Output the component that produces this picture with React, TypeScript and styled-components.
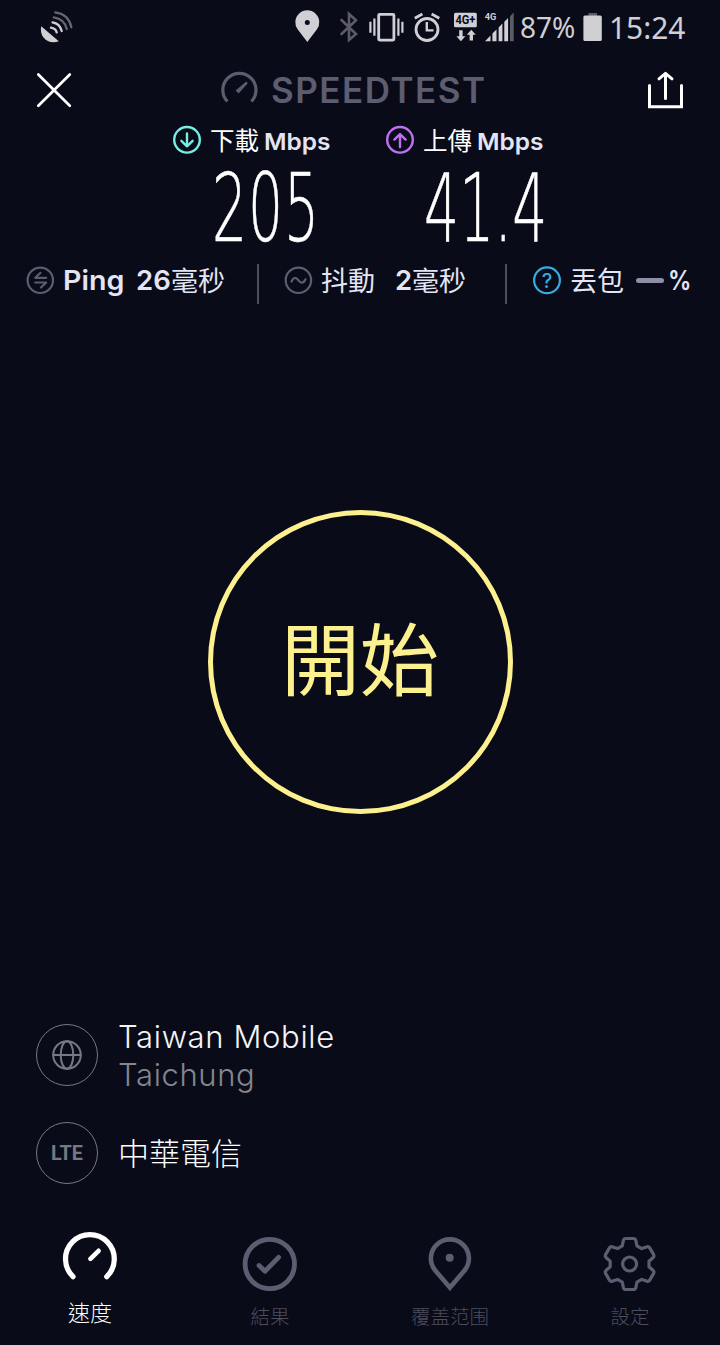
import React from 'react';
import styled, { createGlobalStyle } from 'styled-components';

const GlobalStyle = createGlobalStyle`
  * { box-sizing: border-box; }
  body { margin: 0; background: #090b19; }
`;

const LATIN = `Inter, 'Noto Sans CJK TC', sans-serif`;
const CJK = `'Noto Sans CJK TC', sans-serif`;
const MUTED = '#5c5d70';
const LIGHT = '#e4e5f4';

const Screen = styled.main`
  width: 720px;
  height: 1345px;
  display: flex;
  flex-direction: column;
  background: #090b19;
  color: #fff;
  overflow: hidden;
  font-family: ${LATIN};
`;

/* Text run; $w is the room it takes in its row, $sx narrows or widens the letters. */
const Text = styled.span<{
  $size: number; $w?: number; $weight?: number; $color?: string;
  $track?: number; $sx?: number; $font?: string; $ml?: number; $drop?: number;
}>`
  flex: none;
  display: block;
  white-space: pre;
  width: ${p => (p.$w ? `${p.$w}px` : 'auto')};
  margin-left: ${p => p.$ml ?? 0}px;
  margin-top: ${p => p.$drop ?? 0}px;
  font: ${p => p.$weight ?? 400} ${p => p.$size}px/1 ${p => p.$font ?? LATIN};
  letter-spacing: ${p => p.$track ?? 0}px;
  color: ${p => p.$color ?? '#fff'};
  transform: scaleX(${p => p.$sx ?? 1});
  transform-origin: left center;
`;

const Figure = styled(Text)`
  -webkit-text-stroke: 0.6px #fff;
`;

const Svg = styled.svg<{ $ml?: number }>`
  flex: none;
  display: block;
  overflow: visible;
  fill: none;
  stroke-linecap: round;
  stroke-linejoin: round;
  margin-left: ${p => p.$ml ?? 0}px;
`;

type IconProps = { box: [number, number, number, number]; ml?: number; children: React.ReactNode };
const Icon = ({ box, ml, children }: IconProps) => (
  <Svg $ml={ml} width={box[2]} height={box[3]} viewBox={box.join(' ')}>{children}</Svg>
);

const StatusBar = styled.div`
  height: 54px;
  display: flex;
  align-items: center;
  padding-left: 40px;
`;

const Header = styled.header`
  height: 72px;
  display: flex;
  align-items: center;
  padding-left: 36px;
`;

const Speeds = styled.section`
  height: 129px;
  display: flex;
  padding-left: 173px;
`;
const Speed = styled.div<{ $w: number }>`
  width: ${p => p.$w}px;
  display: flex;
  flex-direction: column;
`;
const SpeedLabel = styled.div`
  height: 28px;
  display: flex;
  align-items: center;
`;

const Stats = styled.section`
  height: 50px;
  display: flex;
  align-items: center;
  padding-left: 26px;
`;
const Divider = styled.div<{ $ml: number }>`
  flex: none;
  width: 2px;
  height: 40px;
  margin: 8px 0 0 ${p => p.$ml}px;
  background: #4d4e60;
`;
const Dash = styled.div`
  flex: none;
  width: 28px;
  height: 5px;
  border-radius: 3px;
  background: #8e8fa6;
`;

const Stage = styled.section`
  height: 711px;
  display: flex;
  justify-content: center;
  padding-top: 205px;
`;
const StartButton = styled.button`
  width: 305px;
  height: 304px;
  padding: 0;
  border: 5px solid #fdf08e;
  border-radius: 50%;
  background: none;
  display: flex;
  align-items: center;
  justify-content: center;
`;

const Connection = styled.div`
  height: 98px;
  display: flex;
  align-items: center;
  padding: 0 0 20px 36px;
`;
const RoundBadge = styled.div`
  flex: none;
  width: 62px;
  height: 62px;
  border: 1.5px solid #777884;
  border-radius: 50%;
  display: flex;
  align-items: center;
  justify-content: center;
`;
const Names = styled.div`
  display: flex;
  flex-direction: column;
  gap: 7px;
  margin-left: 20px;
`;

const Nav = styled.nav`
  flex: 1;
  display: grid;
  grid-template-columns: repeat(4, 180px);
`;
const Tab = styled.div<{ $top: number; $gap: number }>`
  display: flex;
  flex-direction: column;
  align-items: center;
  padding-top: ${p => p.$top}px;
  gap: ${p => p.$gap}px;
`;

const gearPath = (() => {
  const at = (x: number, y: number, deg: number) => {
    const a = (deg * Math.PI) / 180;
    return `${(x * Math.cos(a) - y * Math.sin(a)).toFixed(2)} ${(x * Math.sin(a) + y * Math.cos(a)).toFixed(2)}`;
  };
  let d = '';
  for (let i = 0; i < 6; i++) {
    const r = i * 60;
    d += `${i ? 'L' : 'M'}${at(-7.3, -18.2, r)} L${at(-6.3, -23.3, r)} Q${at(-5.8, -25.5, r)} ${at(-3.6, -25.5, r)}`;
    d += ` L${at(3.6, -25.5, r)} Q${at(5.8, -25.5, r)} ${at(6.3, -23.3, r)} L${at(7.3, -18.2, r)} `;
  }
  return d + 'Z';
})();

export default function App() {
  return (
    <>
      <GlobalStyle />
      <Screen>
        <StatusBar>
          <Icon box={[40, 11, 32, 32]}>
            <path d="M41.2 26.2C39 37 48 45 58.8 41.2Z" fill="#d0d0d4" />
            <g strokeWidth="2.3">
              <path d="M51 27.7Q55.5 28.4 56.7 32.3M52.5 22.3Q60 23.5 61.7 31" stroke="#d0d0d4" />
              <path d="M53.8 17.4Q64.5 19 66.8 29M55.3 12.4Q69 14.5 71.3 27.3" stroke="#65666f" />
            </g>
          </Icon>
          <Icon box={[295, 11, 24, 32]} ml={223}>
            <path fillRule="evenodd" fill="#d0d0d4" d="M307.3 42L297.8 29.6A12 12 0 1 1 316.8 29.6ZM307.3 20A2.5 2.5 0 1 0 307.3 25A2.5 2.5 0 1 0 307.3 20Z" />
          </Icon>
          <Icon box={[340, 11, 18, 32]} ml={21}>
            <path d="M341.5 20L356 34L349 40V14L356 20.3L341.5 34" stroke="#5b5c65" strokeWidth="2.6" strokeLinejoin="miter" />
          </Icon>
          <Icon box={[369, 11, 36, 32]} ml={11}>
            <g stroke="#d0d0d4" strokeLinecap="butt">
              <rect x="378.7" y="14.3" width="15.2" height="25.8" rx="1" strokeWidth="2.8" />
              <path d="M370.4 21.7V32.7M374.4 18.5V35.7M398.4 18.5V35.7M402.4 21.7V32.7" strokeWidth="2.2" />
            </g>
          </Icon>
          <Icon box={[414, 11, 27, 32]} ml={9}>
            <g stroke="#d0d0d4" strokeWidth="2.8" strokeLinecap="butt">
              <circle cx="427" cy="29.5" r="11" />
              <path d="M414.8 18.2L422.4 14M431.6 14L439.3 18.2" />
              <path d="M426.8 22V30.4H433.5" strokeWidth="2.4" strokeLinejoin="miter" />
            </g>
          </Icon>
          <Icon box={[454, 11, 23, 32]} ml={13}>
            <rect x="454" y="12.8" width="22.8" height="14.4" rx="1.5" fill="#d0d0d4" />
            <text x="455.4" y="24.3" fill="#090b19" fontFamily="Roboto, sans-serif" fontWeight="700" fontSize="12" textLength="20" lengthAdjust="spacingAndGlyphs">4G+</text>
            <path d="M459.2 30.3H462.6V36.2H465.4L460.9 41.2L456.4 36.2H459.2ZM469.6 40.6H473V34.8H475.8L471.3 29.8L466.8 34.8H469.6Z" fill="#d0d0d4" />
          </Icon>
          <Icon box={[484, 11, 30, 32]} ml={7}>
            <text x="484.8" y="20" fill="#d0d0d4" fontFamily="Roboto, sans-serif" fontWeight="700" fontSize="9.5" textLength="11.6" lengthAdjust="spacingAndGlyphs">4G</text>
            <path d="M485 41.2L490.5 35.5V41.2ZM492.4 41.2V33.6L496.5 29.4V41.2ZM498.6 41.2V27.4L502.4 23.6V41.2ZM504.3 41.2V21.7L508.1 18V41.2Z" fill="#d0d0d4" />
            <path d="M510 41.2V16.2L513.7 12.6V41.2Z" fill="#5b5c65" />
          </Icon>
          <Text $size={29.5} $w={62} $ml={6} $sx={0.95} $color="#cfcfd4" $font="'Noto Sans', sans-serif">87%</Text>
          <Icon box={[583, 11, 19, 32]} ml={1}>
            <path d="M588.5 13H597V16H588.5Z" fill="#5b5c65" />
            <rect x="583.4" y="15.6" width="18.4" height="25.4" rx="1.5" fill="#d0d0d4" />
          </Icon>
          <Text $size={31.5} $ml={7} $sx={0.95} $color="#cfcfd4" $font="'Noto Sans', sans-serif">15:24</Text>
        </StatusBar>

        <Header>
          <Icon box={[36, 72, 36, 36]}>
            <path d="M38.3 74.5L69.8 105.8M69.8 74.5L38.3 105.8" stroke="#fff" strokeWidth="2.7" />
          </Icon>
          <Icon box={[221, 72, 37, 36]} ml={149}>
            <path d="M227.4 101.5A16.6 16.6 0 1 1 251.4 101.5" stroke={MUTED} strokeWidth="3.2" strokeLinecap="butt" />
            <path d="M235.6 90.6L246.2 81.6L247.8 83.2L238.6 93.6Z" fill={MUTED} />
          </Icon>
          <Text $size={35} $w={376} $ml={13} $weight={600} $track={1.5} $drop={1} $color={MUTED}>SPEEDTEST</Text>
          <Icon box={[647, 72, 36, 36]}>
            <g stroke="#fff" strokeWidth="3">
              <path d="M649.5 85.5V106.8H681.5V85.5" strokeLinejoin="miter" />
              <path d="M665.5 98.5V74M659 78.8L665.5 73.3L672 78.8" />
            </g>
          </Icon>
        </Header>

        <Speeds>
          <Speed $w={213}>
            <SpeedLabel>
              <Icon box={[173, 126, 28, 28]}>
                <g stroke="#76eee3" strokeWidth="2.4">
                  <circle cx="187" cy="139.8" r="12.8" />
                  <path d="M187 133.5V146.3M181.4 140.8L187 146.3L192.6 140.8" />
                </g>
              </Icon>
              <Text $size={24.5} $w={54} $ml={9} $drop={1} $font={CJK}>下載</Text>
              <Text $size={23.5} $weight={600} $sx={1.04} $color={LIGHT} $drop={3}>Mbps</Text>
            </SpeedLabel>
            <Figure $size={95} $weight={200} $ml={39} $drop={7} $sx={0.58} $track={1.7} $font="'DejaVu Sans', sans-serif">205</Figure>
          </Speed>
          <Speed $w={200}>
            <SpeedLabel>
              <Icon box={[386, 126, 28, 28]}>
                <g stroke="#c070f2" strokeWidth="2.4">
                  <circle cx="400" cy="139.8" r="12.8" />
                  <path d="M400 147V134.2M394.4 139.6L400 134.1L405.6 139.6" />
                </g>
              </Icon>
              <Text $size={24.5} $w={54} $ml={9} $drop={1} $font={CJK}>上傳</Text>
              <Text $size={23.5} $weight={600} $sx={1.04} $color={LIGHT} $drop={3}>Mbps</Text>
            </SpeedLabel>
            <Figure $size={95} $weight={200} $ml={38} $drop={7} $sx={0.58} $track={0.3} $font="'DejaVu Sans', sans-serif">41.4</Figure>
          </Speed>
        </Speeds>

        <Stats>
          <Icon box={[26, 266, 28, 28]}>
            <g stroke={MUTED} strokeWidth="2.2">
              <circle cx="40.3" cy="280.3" r="12.7" />
              <path d="M40.5 272.8L35.3 277.8H46.2M35.3 282.5H46.2L41 287.5" />
            </g>
          </Icon>
          <Text $size={27.5} $w={73} $ml={9} $weight={600} $sx={1.04} $drop={1} $color={LIGHT}>Ping</Text>
          <Text $size={27.5} $w={35} $weight={600} $drop={1} $color={LIGHT}>26</Text>
          <Text $size={27} $w={54} $drop={-2} $color={LIGHT} $font={CJK}>毫秒</Text>
          <Divider $ml={32} />
          <Icon box={[284, 266, 28, 28]} ml={25}>
            <g stroke={MUTED} strokeWidth="2.2">
              <circle cx="298.4" cy="280.3" r="12.7" />
              <path d="M291.5 281.5C293.5 276.5 296.5 277.5 298.5 280.3S303.5 284 305.5 279.3" />
            </g>
          </Icon>
          <Text $size={27} $w={74} $ml={9} $drop={-2} $color={LIGHT} $font={CJK}>抖動</Text>
          <Text $size={27.5} $w={17} $weight={600} $drop={1} $color={LIGHT}>2</Text>
          <Text $size={27} $w={54} $drop={-2} $color={LIGHT} $font={CJK}>毫秒</Text>
          <Divider $ml={39} />
          <Icon box={[533, 266, 28, 28]} ml={26}>
            <circle cx="547" cy="280.3" r="12.9" stroke="#35ace2" strokeWidth="2.2" />
            <text x="547" y="287.5" textAnchor="middle" fill="#35ace2" fontFamily="Inter, sans-serif" fontWeight="500" fontSize="20">?</text>
          </Icon>
          <Text $size={27} $w={66} $ml={9} $drop={-2} $color={LIGHT} $font={CJK}>丟包</Text>
          <Dash />
          <Text $size={26.5} $ml={4} $weight={600} $drop={1} $sx={0.88} $color={LIGHT}>%</Text>
        </Stats>

        <Stage>
          <StartButton>
            <Text $size={79} $drop={-13} $color="#fdf08e" $font={CJK}>開始</Text>
          </StartButton>
        </Stage>

        <Connection>
          <RoundBadge>
            <Icon box={[52, 1040, 30, 30]}>
              <g stroke="#777884" strokeWidth="2">
                <circle cx="67" cy="1055" r="13.8" />
                <ellipse cx="67" cy="1055" rx="6.3" ry="13.8" />
                <path d="M53.2 1055H80.8" />
              </g>
            </Icon>
          </RoundBadge>
          <Names>
            <Text $size={31} $weight={300} $track={0.65} $color="#f4f4f6">Taiwan Mobile</Text>
            <Text $size={31} $weight={300} $track={0.6} $color="#85868e">Taichung</Text>
          </Names>
        </Connection>
        <Connection>
          <RoundBadge>
            <Text $size={21} $weight={700} $ml={2} $color="#777884" $font="Roboto, sans-serif" $sx={0.94}>LTE</Text>
          </RoundBadge>
          <Names>
            <Text $size={31} $weight={300} $drop={-4} $font={CJK}>中華電信</Text>
          </Names>
        </Connection>

        <Nav>
          <Tab $top={19} $gap={14}>
            <Icon box={[62.8, 1231, 55, 55]}>
              <path d="M72.8 1276.6A24.4 24.4 0 1 1 106.6 1276.6" stroke="#fff" strokeWidth="5.3" />
              <path d="M90.2 1258.9L98.4 1250.8" stroke="#fff" strokeWidth="4.6" />
            </Icon>
            <Text $size={22} $weight={300} $font={CJK}>速度</Text>
          </Tab>
          <Tab $top={24} $gap={14}>
            <Icon box={[242.8, 1236, 55, 56]}>
              <g stroke={MUTED}>
                <circle cx="269.6" cy="1264" r="24.7" strokeWidth="4.8" />
                <path d="M258.8 1265.5L264.8 1271.2L278.4 1257.4" strokeWidth="4.8" />
              </g>
            </Icon>
            <Text $size={19.5} $weight={300} $color="#4c4d5d" $font={CJK}>結果</Text>
          </Tab>
          <Tab $top={24} $gap={14}>
            <Icon box={[422.8, 1236, 55, 56]}>
              <path d="M449.7 1287.6L434.9 1270.3A19 19 0 1 1 464.5 1270.3Z" stroke={MUTED} strokeWidth="4.6" strokeLinejoin="miter" />
              <circle cx="449.5" cy="1257.8" r="4" fill={MUTED} />
            </Icon>
            <Text $size={19.5} $weight={300} $color="#4c4d5d" $font={CJK}>覆盖范围</Text>
          </Tab>
          <Tab $top={24} $gap={14}>
            <Icon box={[-26.6, -28, 55, 56]}>
              <g stroke={MUTED} strokeWidth="3.2">
                <path d={gearPath} />
                <circle r="7" />
              </g>
            </Icon>
            <Text $size={19.5} $weight={300} $color="#4c4d5d" $font={CJK}>設定</Text>
          </Tab>
        </Nav>
      </Screen>
    </>
  );
}
